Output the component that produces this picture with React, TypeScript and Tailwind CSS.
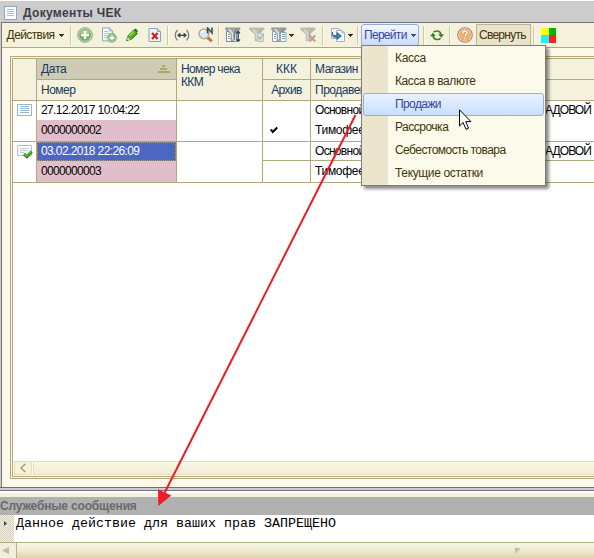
import React from 'react';
import clsx from 'clsx';

// ── Data ─────────────────────────────────────────────────────────────────────

const menuItems = [
  { label: 'Касса', tracking: 'tracking-[-0.3px]' },
  { label: 'Касса в валюте', tracking: 'tracking-[-0.4px]' },
  { label: 'Продажи', tracking: 'tracking-[-0.6px]', active: true },
  { label: 'Рассрочка', tracking: 'tracking-[-0.5px]' },
  { label: 'Себестомость товара', tracking: 'tracking-[-0.55px]' },
  { label: 'Текущие остатки', tracking: 'tracking-[-0.35px]' },
];

const rows = [
  { date: '27.12.2017 10:04:22', number: '0000000002', archived: true, selected: false },
  { date: '03.02.2018 22:26:09', number: '0000000003', archived: false, selected: true },
];

// ── Icons ────────────────────────────────────────────────────────────────────

const Caret = ({ className = 'fill-[#3f3408]' }: { className?: string }) => (
  <svg width="5" height="3" viewBox="0 0 5 3" className={clsx('shrink-0', className)} shapeRendering="crispEdges">
    <path d="M0 0h5v1h-1v1h-1v1h-1v-1h-1v-1h-1z" />
  </svg>
);

const Icon = ({ children }: { children: React.ReactNode }) => (
  <svg width="16" height="16" viewBox="0 0 16 16" fill="none" className="shrink-0">
    {children}
  </svg>
);

const PlusIcon = () => (
  <Icon>
    <circle cx="8" cy="8" r="7.300" fill="#cfdcc4" stroke="#8aa97d" />
    <circle cx="8" cy="8" r="6" fill="#78b25e" />
    <path d="M3 6a5.400 5.400 0 0 1 10 0z" fill="#a5cf92" />
    <path d="M8 4v8M4 8h8" stroke="#fff" strokeWidth="2.400" />
  </Icon>
);

const CopyAddIcon = () => (
  <Icon>
    <path d="M1.500.9h7l3 3v10h-10z" fill="#f4f8fb" stroke="#91a8ba" />
    <path d="M8.500.9v3h3" fill="#cfdce6" stroke="#91a8ba" />
    <path d="M3 4.500h4M3 6.500h6M3 8.500h4M3 10.500h3" stroke="#aac4d8" />
    <circle cx="11" cy="10.800" r="4.500" fill="#cfdcc4" stroke="#8aa97d" strokeWidth=".8" />
    <circle cx="11" cy="10.800" r="3.700" fill="#84b86c" />
    <path d="M11 8.300v5M8.500 10.800h5" stroke="#fff" strokeWidth="1.700" />
  </Icon>
);

const PencilIcon = () => (
  <Icon>
    <path d="M3 13.200l1-4.500 5.800-5.700 3.600 3.600-5.700 5.500z" fill="#4fae1f" stroke="#2d7c12" />
    <path d="M5.300 9.300l5-5" stroke="#9ae05e" strokeWidth="1.600" />
    <path d="M9.700 2.900l1.300-1.200c.7-.5 3.200 1.800 2.700 2.800l-1.100 1.300z" fill="#2c7210" />
    <path d="M2.800 13.500l.8-3.500 2.800 2.600z" fill="#f6efc9" stroke="#73823c" strokeWidth=".5" />
    <path d="M2.200 14l1.500-.4-.9-1z" fill="#222" />
  </Icon>
);

const DocDeleteIcon = () => (
  <Icon>
    <path d="M2 1.500h8.500l3 3v10H2z" fill="#edf3f8" stroke="#88a3b8" />
    <path d="M10.500 1.500v3h3" fill="#c5d5e1" stroke="#88a3b8" />
    <path d="M5 6l5.600 6M10.600 6L5 12" stroke="#cf2318" strokeWidth="2.300" />
  </Icon>
);

const WidthIcon = () => (
  <Icon>
    <path d="M3.500 3q-4.600 5.200 0 10.400M12.500 3q4.600 5.200 0 10.400" stroke="#77776d" strokeWidth="1.200" />
    <path d="M4 8.300h8" stroke="#34495a" strokeWidth="1.400" />
    <path d="M6.300 5.600L3 8.300 6.300 11zM9.700 5.600L13 8.300 9.700 11z" fill="#34495a" />
  </Icon>
);

const SearchNIcon = () => (
  <Icon>
    <path d="M9.500 10.300l4.300 4" stroke="#b9774c" strokeWidth="3" />
    <circle cx="6" cy="6.800" r="4.900" fill="#d7e8f5" stroke="#c9a488" strokeWidth="1.500" />
    <path d="M3.500 6.300a3 3 0 0 1 3-2.700" stroke="#fff" strokeWidth="1.500" />
    <path d="M9.600 6.500V1l4.400 5V.4" stroke="#33505f" strokeWidth="1.600" />
  </Icon>
);

const Funnel = ({ pale }: { pale?: boolean }) => (
  <>
    <path
      d="M.6.900h14.300v1.500L10 7.300v5.500L6.200 14V7.300L.6 2.400z"
      fill={pale ? '#bebeb8' : '#a3a5a8'}
      stroke={pale ? '#b1b1aa' : '#7e8286'}
      strokeWidth=".7"
    />
    <path d="M4 2.200l3.600 4.300v6" stroke={pale ? '#dcdcd6' : '#e4e6e8'} strokeWidth="1.500" />
    <path d="M12 2.200L9.200 6.500v5" stroke={pale ? '#a9a9a3' : '#6f7377'} strokeWidth="1" />
  </>
);

const FilterSortIcon = () => (
  <Icon>
    <path d="M1.500 4.500h10v10h-10z" fill="#fff" stroke="#6f8fa6" />
    <path d="M3 7.500h2M3 9.500h2M3 11.500h7" stroke="#86a4ba" />
    <Funnel />
    <path d="M13.200 4.500v9.500M11.500 6.300l1.700-1.800 1.700 1.800M11.500 12.500l1.700 1.800 1.700-1.800" stroke="#25435c" strokeWidth="1.300" />
  </Icon>
);

const FilterValueIcon = () => (
  <Icon>
    <Funnel pale />
    <path d="M8.500 6.500h6v8h-6z" fill="#dde0dc" stroke="#bbc2c0" />
    <path d="M9.500 10l1.700 2 3-4.500" stroke="#a5b1b0" strokeWidth="1.200" />
  </Icon>
);

const FilterListIcon = () => (
  <Icon>
    <path d="M1.500 4.500h8v10h-8z" fill="#fff" stroke="#8ba0b0" />
    <path d="M3 7.500h2M3 9.500h2M3 11.500h2" stroke="#86a4ba" />
    <Funnel />
    <path d="M9.500 5.500h5.500v9H9.500z" fill="#f5fafd" stroke="#88a5ba" />
    <path d="M11 7.500h3M11 9.500h3M11 11.500h3" stroke="#79a0c0" />
  </Icon>
);

const FilterClearIcon = () => (
  <Icon>
    <Funnel pale />
    <path d="M9.500 8.500l5.700 6M15.200 8.500l-5.700 6" stroke="#c29a94" strokeWidth="1.900" />
  </Icon>
);

const GoDocIcon = () => (
  <Icon>
    <path d="M1.500 1.500h7l2 2v8h-9z" fill="#eef4f8" stroke="#9fb4c4" />
    <path d="M6.500 3.500h5.500l2.500 2.500v8.500h-8z" fill="#f7fafc" stroke="#9fb4c4" />
    <path d="M12 3.500v2.500h2.500" stroke="#9fb4c4" />
    <path d="M2.500 5v2q0 1.500 1.500 1.500h3V5.500L11.500 9 7 12.500v-2.200H4.500Q1.500 9.800 2.500 5z" fill="#3f82ab" stroke="#1f567b" strokeWidth=".7" />
  </Icon>
);

const RefreshIcon = () => (
  <Icon>
    <path d="M4.500 5.300C6.500 3.100 11.200 3.400 12 7.500M11.500 11.200C9.500 13.400 4.800 13 4 9" stroke="#2c8420" strokeWidth="1.500" />
    <path d="M9.200 7.200h5.800l-2.900 3.500zM1 9.200h5.800L3.900 5.700z" fill="#2c8420" />
  </Icon>
);

const HelpIcon = () => (
  <svg width="16" height="16" viewBox="0 0 16 16" className="shrink-0">
    <circle cx="8" cy="8" r="7.300" fill="#f6dcbb" stroke="#a58a72" strokeWidth="1.100" />
    <circle cx="8" cy="8" r="6" fill="#f0b173" />
    <path d="M5.700 6.200c.1-3 4.700-2.800 4.400-.1-.1 1.500-2.200 1.500-2.200 3.400M7.900 10.900v1.500" fill="none" stroke="#7d4a20" strokeWidth="2.200" opacity=".45" />
    <path d="M5.700 6.200c.1-3 4.700-2.800 4.400-.1-.1 1.500-2.200 1.500-2.200 3.400M7.900 10.900v1.500" fill="none" stroke="#fff" strokeWidth="1.400" />
  </svg>
);

const WindowIcon = () => (
  <svg width="13" height="14" viewBox="0 0 13 14" shapeRendering="crispEdges" className="shrink-0">
    <path d="M.5.5h12v13H.5z" fill="#f7fbff" stroke="#8fa9bd" />
    <path d="M3 3.500h7M3 5.500h7M3 7.500h7M3 9.500h7" stroke="#a3c3de" />
  </svg>
);

const FormIcon = () => (
  <svg width="15" height="12" viewBox="0 0 15 12" shapeRendering="crispEdges" className="shrink-0">
    <path d="M.5.5h14v11H.5z" fill="#fff" stroke="#9db4c7" />
    <path d="M3 2.500h9M3 4.500h9M3 6.500h9M3 8.500h9" stroke="#94b3cd" />
  </svg>
);

const PostedIcon = () => (
  <svg width="16" height="14" viewBox="0 0 16 14" className="shrink-0">
    <path d="M.5.5h14v10H.5z" fill="#fbfcfd" stroke="#b4bfc7" />
    <path d="M3 3.500h9M3 5.500h8M3 7.500h4" stroke="#c2ccd4" />
    <path d="M7 9l3 2.600 4.600-5" fill="none" stroke="#2e7a16" strokeWidth="3" />
    <path d="M7 8.700l3 2.400 4.400-4.800" fill="none" stroke="#6cc032" strokeWidth="1.400" />
  </svg>
);

// ── Toolbar ──────────────────────────────────────────────────────────────────

const Slot = ({ className, children }: { className: string; children?: React.ReactNode }) => (
  <div className={clsx('flex h-full shrink-0 items-center justify-center', className)}>{children}</div>
);

const Separator = () => (
  <div className="h-[19px] w-0.5 shrink-0 border-r border-[#fdfbf0] bg-[#cfc7a5]" />
);

const Toolbar = () => (
  <div className="flex h-[25px] items-center border-b border-[#b3a77d] bg-[#f4f1dd] text-[#3f3408]">
    <Slot className="w-[68px] gap-[5px] pr-px">
      <span className="tracking-[-0.6px]">Действия</span>
      <Caret />
    </Slot>
    <Separator />
    <Slot className="w-[25px]"><PlusIcon /></Slot>
    <Slot className="w-[23px]"><CopyAddIcon /></Slot>
    <Slot className="w-[23px]"><PencilIcon /></Slot>
    <Slot className="w-6"><DocDeleteIcon /></Slot>
    <Separator />
    <Slot className="w-[25px]"><WidthIcon /></Slot>
    <Slot className="w-6"><SearchNIcon /></Slot>
    <Separator />
    <Slot className="w-[25px]"><FilterSortIcon /></Slot>
    <Slot className="w-[23px]"><FilterValueIcon /></Slot>
    <Slot className="w-[29px] gap-0.5"><FilterListIcon /><Caret /></Slot>
    <Slot className="w-[25px] pr-1"><FilterClearIcon /></Slot>
    <Separator />
    <Slot className="w-[33px] gap-0.5 pl-px"><GoDocIcon /><Caret /></Slot>
    <Separator />
    <div className="w-0.5 shrink-0" />
    <div className="flex h-[22px] w-[58px] shrink-0 items-center gap-1 rounded-[3px] border border-[#93ace0] bg-linear-to-b from-[#f4f8ff] to-[#c9dcfa] pl-0.5 text-[#34469c]">
      <span className="tracking-[-0.7px]">Перейти</span>
      <Caret className="fill-[#34469c]" />
    </div>
    <div className="w-1 shrink-0" />
    <Separator />
    <Slot className="w-6"><RefreshIcon /></Slot>
    <Separator />
    <Slot className="w-[25px] pl-0.5"><HelpIcon /></Slot>
    <div className="flex h-[22px] w-[55px] shrink-0 items-center border border-[#c0b58b] bg-[#e9e3ca] pl-0.5 tracking-[-0.75px]">
      Свернуть
    </div>
    <div className="w-0.5 shrink-0" />
    <Separator />
    <Slot className="w-[21px] pl-1.5">
      <div className="grid size-[15px] grid-cols-2">
        <div className="bg-[#ffff00]" />
        <div className="bg-[#00b400]" />
        <div className="bg-[#22f0f0]" />
        <div className="bg-[#ff2020]" />
      </div>
    </Slot>
  </div>
);

// ── Table ────────────────────────────────────────────────────────────────────

const COLUMNS = 'grid grid-cols-[24px_140px_86px_48px_1fr]';

const TableHeader = () => (
  <div className={clsx(COLUMNS, 'h-[42px] border-b border-[#b3a77d] bg-[#f4f1dd] text-[#17375e]')}>
    <div className="border-r border-[#b3a77d]" />
    <div className="grid grid-rows-[21px_20px] border-r border-[#b3a77d]">
      <div className="flex items-center justify-between border-b border-[#b3a77d] bg-[#cfccb5] pr-1.5 pl-1">
        <span className="tracking-[-0.3px]">Дата</span>
        <svg width="12" height="8" viewBox="0 0 12 8" shapeRendering="crispEdges" className="fill-[#b3a565]">
          <path d="M4 0h3v2h-3zM2 3h7v2h-7zM0 6h12v2h-12z" />
        </svg>
      </div>
      <div className="flex items-center pl-1 tracking-[-0.5px]">Номер</div>
    </div>
    <div className="border-r border-[#b3a77d] pt-1 pl-1 leading-[13px] tracking-[-0.65px]">
      Номер чека
      <br />
      ККМ
    </div>
    <div className="grid grid-rows-[21px_20px] border-r border-[#b3a77d] text-center">
      <div className="flex items-center justify-center border-b border-[#b3a77d]">ККК</div>
      <div className="flex items-center justify-center tracking-[-0.6px]">Архив</div>
    </div>
    <div className="grid grid-rows-[21px_20px]">
      <div className="flex items-center border-b border-[#b3a77d] pl-1 tracking-[-0.5px]">Магазин</div>
      <div className="flex items-center pl-1 tracking-[-0.5px]">Продавец</div>
    </div>
  </div>
);

const TableRow = ({ row }: { row: (typeof rows)[number] }) => {
  const line = row.selected ? 'border-b border-[#b3a77d]' : '';

  return (
    <div className={clsx(COLUMNS, 'h-[41px] border-b border-[#b3a77d] text-black')}>
      <div className="border-r border-[#b3a77d] pt-[3px] pl-1">
        {row.selected ? <PostedIcon /> : <FormIcon />}
      </div>
      <div className="grid grid-rows-[19px_21px] border-r border-[#b3a77d] tracking-[-0.67px]">
        <div
          className={clsx(
            'flex items-center pb-px pl-1 tracking-[-0.62px]',
            row.selected && 'bg-[#4c66c3] text-white outline-1 -outline-offset-1 outline-dotted outline-[#b3a050]'
          )}
        >
          {row.date}
        </div>
        <div className="flex items-center bg-[#e0bfcb] pb-0.5 pl-1">{row.number}</div>
      </div>
      <div className="border-r border-[#b3a77d]" />
      <div className="grid grid-rows-[19px_21px] border-r border-[#b3a77d]">
        <div className={line} />
        <div className="flex items-center pb-0.5 pl-[7px]">
          {row.archived && (
            <svg width="8" height="8" viewBox="0 0 8 8">
              <path d="M.7 3.500L2.800 6 7.300 1.500" fill="none" stroke="#000" strokeWidth="2.100" />
            </svg>
          )}
        </div>
      </div>
      <div className="grid grid-rows-[19px_21px]">
        <div className={clsx('flex items-center justify-between pb-px pr-[3px] pl-1', line)}>
          <span className="tracking-[-0.7px]">Основной</span>
          <span className="tracking-[-0.9px]">АДОВОЙ</span>
        </div>
        <div className="flex items-center pb-0.5 pl-1 tracking-[-0.3px]">Тимофеев</div>
      </div>
    </div>
  );
};

// ── Overlays ─────────────────────────────────────────────────────────────────

const GoMenu = () => (
  <div className="absolute top-[45px] left-[361px] h-[141px] w-[185px] border border-[#7f7d72] bg-[#fcfaea] bg-linear-to-r from-[#ebe5cd] from-[26px] to-[#fcfaea] to-[26px] p-px shadow-[3px_3px_3px_rgba(0,0,0,0.45)]">
    {menuItems.map((item) => (
      <div
        key={item.label}
        className={clsx(
          'flex h-[23px] items-center rounded-[3px] border pb-0.5 pl-[31px]',
          item.active
            ? 'border-[#93b0e6] bg-linear-to-b from-[#e9f2ff] to-[#c8dffd] text-[#34469c]'
            : 'border-transparent text-[#3f3408]',
          item.tracking
        )}
      >
        {item.label}
      </div>
    ))}
  </div>
);

const Arrow = () => (
  <svg width="594" height="558" viewBox="0 0 594 558" className="pointer-events-none absolute top-0 left-0">
    <path d="M355.500 115L164 494" stroke="#ee1c24" strokeWidth="2" />
    <path d="M158 489.300L171.300 495.500 158.300 506z" fill="#ee1c24" />
  </svg>
);

const Cursor = () => (
  <svg width="13" height="22" viewBox="0 0 13 22" className="absolute top-[109px] left-[459px]">
    <path d="M.5.8v16.200l3.600-3.500 2.900 6.800 2.600-1.100-2.900-6.600h5.200z" fill="#fff" stroke="#000" />
  </svg>
);

// ── Messages ─────────────────────────────────────────────────────────────────

const Messages = () => (
  <div>
    <div className="flex h-[18px] items-center bg-[#b1b1b1] font-bold text-[#696969]">
      <span className="tracking-[-0.17px]">Служебные сообщения</span>
    </div>
    <div className="flex h-[27px] bg-white">
      <div className="w-3.5 bg-[#f4f1dd] bg-[repeating-conic-gradient(#d3cfba_0_25%,#f4f1dd_0_50%)] bg-size-[2px_2px] pt-1.5 pl-1">
        <svg width="3" height="5" viewBox="0 0 3 5">
          <path d="M0 0l3 2.500L0 5z" fill="#1d4a75" />
        </svg>
      </div>
      <div className="pt-px pl-0.5 font-['Liberation_Mono',monospace] text-[13.33px] leading-4 text-black">
        Данное действие для ваших прав ЗАПРЕЩЕНО
      </div>
    </div>
    <div className="flex h-4 border-t border-[#b3ab88] bg-linear-to-b from-[#f8f6e8] via-[#f0ecd0] to-[#ddd5ae]">
      <div className="flex w-[17px] items-center border-r border-[#b9b190] bg-[#f1eedc] pl-0.5">
        <svg width="7" height="7" viewBox="0 0 7 7">
          <path d="M7 0v7L0 3.500z" fill="#bcb9a8" />
        </svg>
      </div>
      <div className="flex flex-1 items-center justify-end pr-[74px]">
        <div className="size-[5px] bg-linear-to-br from-[#aaa68f] to-[#f4f0dc]" />
      </div>
    </div>
  </div>
);

// ── App ──────────────────────────────────────────────────────────────────────

const App: React.FC = () => (
  <div className="relative h-[558px] w-[594px] overflow-hidden bg-[#f4f1dd] font-['Liberation_Sans',Arial,sans-serif] text-xs leading-none whitespace-nowrap">
    {/* Title bar */}
    <div className="flex h-[22px] items-center gap-1.5 border-t border-white bg-[#cccccc] pt-0.5 pl-1">
      <WindowIcon />
      <span className="font-bold tracking-[0.3px] text-[#3c3d49]">Документы ЧЕК</span>
    </div>

    {/* Document window */}
    <div className="h-[466px] border-b border-[#6f6c72] bg-[#cccccc] pl-px">
      <div className="flex h-[465px] flex-col border-t border-l border-[#77757a] bg-[#fdf9e9]">
        <Toolbar />
        <div className="mt-2 ml-2 h-[423px] border-y border-l border-[#b3a77d] p-px pr-0">
          <div className="flex h-[419px] flex-col border-y border-l border-[#b3a77d] bg-white">
            <TableHeader />
            {rows.map((row) => (
              <TableRow key={row.number} row={row} />
            ))}
            <div className="flex-1" />
            <div className="flex h-[15px] gap-px bg-[#fdfbee] pl-px">
              <div className="flex h-3.5 w-[18px] items-center justify-center border border-[#e6dfb4] bg-[#f6f3dd]">
                <svg width="6" height="10" viewBox="0 0 6 10">
                  <path d="M5.500.7L1 5l4.500 4.300" fill="none" stroke="#a89b66" strokeWidth="1.400" />
                </svg>
              </div>
              <div className="h-3.5 flex-1 border border-r-0 border-[#e6dfb4] bg-linear-to-b from-[#faf7e3] to-[#f0edd8]" />
            </div>
          </div>
        </div>
      </div>
    </div>
    <div className="h-[3px] border-b border-[#77757f] bg-[#cccccc]" />
    <div className="h-1.5 border-t-2 border-white bg-[#f4f1dd]" />

    <Messages />
    <Arrow />
    <GoMenu />
    <Cursor />
  </div>
);

export default App;
